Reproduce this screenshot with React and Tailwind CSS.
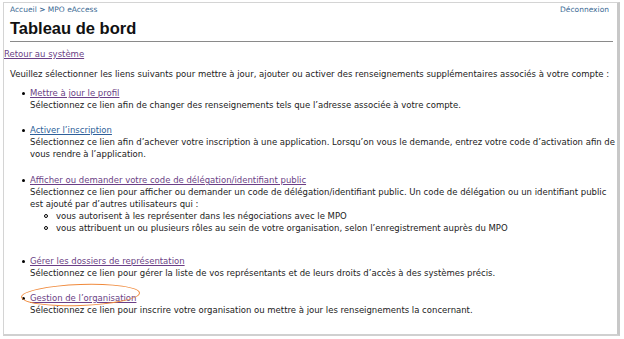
const LINK_VISITED = 'text-[#6b3f86] underline';
const LINK = 'text-[#2e5f9a] underline';

function Item({ label, visited = true, gap = 'mb-[13px]', circled = false, children }) {
  return (
    <li className={`flex ${gap}`}>
      <span className="w-[8px] shrink-0 pt-[5px]">
        <span className="block w-[3px] h-[3px] rounded-full bg-black" />
      </span>
      <div className="relative min-w-0">
        <a className={visited ? LINK_VISITED : LINK}>{label}</a>
        {children}
        {circled && (
          <span className="absolute left-[-9px] top-[-8px] w-[119px] h-[22px] rounded-[50%] border-[1.5px] border-[#f08a3c] -rotate-2" />
        )}
      </div>
    </li>
  );
}

function SubItem({ children }) {
  return (
    <li className="flex">
      <span className="w-[12px] shrink-0 pt-[4px]">
        <span className="block w-[4px] h-[4px] rounded-full border border-black" />
      </span>
      <span>{children}</span>
    </li>
  );
}

export default function App() {
  return (
    <div className="w-[624px] h-[339px] bg-white overflow-hidden pt-[2px] pl-[3px]"
      style={{ fontFamily: '"DejaVu Sans", Verdana, sans-serif' }}>
      <div className="relative w-[617px] h-[334px] border border-[#d4d4d4] border-r-[3px] border-r-[#c8c8c8] border-b-2 border-b-[#d0d0d0] text-[8.5px] leading-[12px] text-[#222]">
        {/* top bar */}
        <div className="flex justify-between pl-[6px] pr-[8px] pt-[2px] text-[7.5px] leading-[10px] text-[#3b6a94]">
          <span>Accueil <span className="font-bold">&gt;</span> MPO eAccess</span>
          <span>Déconnexion</span>
        </div>
        <div className="ml-[6px] mr-[4px] mt-[3px] pb-[2px] border-b border-[#8a8a8a]">
          <h1 className="text-[16.5px] leading-[21px] font-bold text-[#111]" style={{ fontFamily: '"Liberation Sans", Arial, sans-serif' }}>
            Tableau de bord
          </h1>
        </div>
        <div className="mt-[6px]">
          <a className={LINK_VISITED}>Retour au système</a>
        </div>
        <p className="ml-[6px] mt-[8px] whitespace-nowrap">
          Veuillez sélectionner les liens suivants pour mettre à jour, ajouter ou activer des renseignements supplémentaires associés à votre compte :
        </p>

        <ul className="ml-[18px] mr-[2px] mt-[7px]">
          <Item label="Mettre à jour le profil">
            <div>Sélectionnez ce lien afin de changer des renseignements tels que l&#8217;adresse associée à votre compte.</div>
          </Item>
          <Item label="Activer l&#8217;inscription" visited={false} gap="mb-[14px]">
            <div className="whitespace-nowrap">
              Sélectionnez ce lien afin d&#8217;achever votre inscription à une application. Lorsqu&#8217;on vous le demande, entrez votre code d&#8217;activation afin de
              <br />
              vous rendre à l&#8217;application.
            </div>
          </Item>
          <Item label="Afficher ou demander votre code de délégation/identifiant public" gap="mb-[21px]">
            <div className="whitespace-nowrap">
              Sélectionnez ce lien pour afficher ou demander un code de délégation/identifiant public. Un code de délégation ou un identifiant public
              <br />
              est ajouté par d&#8217;autres utilisateurs qui :
            </div>
            <ul className="ml-[14px]">
              <SubItem>vous autorisent à les représenter dans les négociations avec le MPO</SubItem>
              <SubItem>vous attribuent un ou plusieurs rôles au sein de votre organisation, selon l&#8217;enregistrement auprès du MPO</SubItem>
            </ul>
          </Item>
          <Item label="Gérer les dossiers de représentation">
            <div>Sélectionnez ce lien pour gérer la liste de vos représentants et de leurs droits d&#8217;accès à des systèmes précis.</div>
          </Item>
          <Item label="Gestion de l&#8217;organisation" gap="" circled>
            <div>Sélectionnez ce lien pour inscrire votre organisation ou mettre à jour les renseignements la concernant.</div>
          </Item>
        </ul>
      </div>
    </div>
  );
}
